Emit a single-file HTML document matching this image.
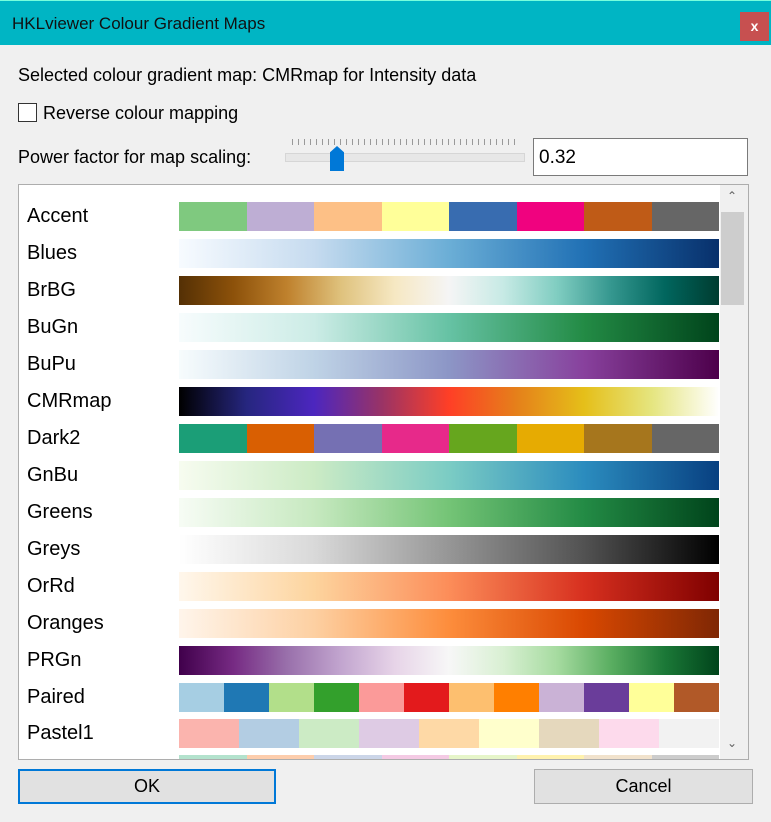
<!DOCTYPE html>
<html><head><meta charset="utf-8"><style>
*{margin:0;padding:0;box-sizing:border-box}
body{width:771px;height:822px;background:#f0f0f0;font-family:"Liberation Sans",sans-serif;position:relative;overflow:hidden;color:#000}
.a{position:absolute}
.title{left:0;top:0;width:771px;height:45px;background:#00b5c4;border-top:1px solid #7fd;}
.title span{position:absolute;left:12px;top:13px;font-size:17px;color:#111}
.close{left:740px;top:12px;width:29px;height:29px;background:#c75050;color:#fff;font-size:14px;font-weight:bold;text-align:center;line-height:28px}
.t{font-size:18px}
.list{left:18px;top:184px;width:731px;height:576px;background:#fff;border:1px solid #adadad;overflow:hidden}
.row{position:absolute;left:0;height:37px;width:700px}
.row span{position:absolute;left:8px;top:3px;font-size:20px}
.bar{position:absolute;left:160px;top:0px;width:540px;height:29px;display:flex}
.bar i{flex:1}
.sb{left:720px;top:185px;width:28px;height:574px;background:#f0f0f0}
.btn{height:35px;background:#e1e1e1;border:1px solid #adadad;text-align:center;font-size:18px;line-height:33px}
</style></head><body>
<div class="a title"><span>HKLviewer Colour Gradient Maps</span></div>
<div class="a close">x</div>
<div class="a t" style="left:18px;top:65px">Selected colour gradient map: CMRmap for Intensity data</div>
<div class="a" style="left:18px;top:103px;width:19px;height:19px;border:1px solid #333;background:#fff"></div>
<div class="a t" style="left:43px;top:103px">Reverse colour mapping</div>
<div class="a t" style="left:18px;top:147px">Power factor for map scaling:</div>
<div class="a" style="left:292px;top:139px;width:226px;height:6px;background:repeating-linear-gradient(90deg,#999 0 1px,transparent 1px 6px)"></div>
<div class="a" style="left:285px;top:153px;width:240px;height:9px;background:#e7e7e7;border:1px solid #d6d6d6"></div>
<div class="a" style="left:330px;top:146px;width:14px;height:25px;background:#0078d7;clip-path:polygon(50% 0,100% 25%,100% 100%,0 100%,0 25%)"></div>
<div class="a" style="left:533px;top:138px;width:215px;height:38px;background:#fff;border:1px solid #7a7a7a;font-size:19px;padding:8px 0 0 5px">0.32</div>
<div class="a list">
<div class="row" style="top:17px"><span>Accent</span><div class="bar"><i style="background:#7fc97f"></i><i style="background:#beaed4"></i><i style="background:#fdc086"></i><i style="background:#ffff99"></i><i style="background:#386cb0"></i><i style="background:#f0027f"></i><i style="background:#bf5b17"></i><i style="background:#666"></i></div></div>
<div class="row" style="top:54px"><span>Blues</span><div class="bar" style="background:linear-gradient(90deg,#f7fbff,#c6dbef,#6baed6,#2171b5,#08306b)"></div></div>
<div class="row" style="top:91px"><span>BrBG</span><div class="bar" style="background:linear-gradient(90deg,#543005,#8c510a,#bf812d,#dfc27d,#f6e8c3,#f5f5f5,#c7eae5,#80cdc1,#35978f,#01665e,#003c30)"></div></div>
<div class="row" style="top:128px"><span>BuGn</span><div class="bar" style="background:linear-gradient(90deg,#f7fcfd,#ccece6,#66c2a4,#238b45,#00441b)"></div></div>
<div class="row" style="top:165px"><span>BuPu</span><div class="bar" style="background:linear-gradient(90deg,#f7fcfd,#bfd3e6,#8c96c6,#88419d,#4d004b)"></div></div>
<div class="row" style="top:202px"><span>CMRmap</span><div class="bar" style="background:linear-gradient(90deg,#000,#26267f,#4c26bf,#993366,#ff3f26,#e5801a,#e5bf19,#e5e57f,#fff)"></div></div>
<div class="row" style="top:239px"><span>Dark2</span><div class="bar"><i style="background:#1b9e77"></i><i style="background:#d95f02"></i><i style="background:#7570b3"></i><i style="background:#e7298a"></i><i style="background:#66a61e"></i><i style="background:#e6ab02"></i><i style="background:#a6761d"></i><i style="background:#666"></i></div></div>
<div class="row" style="top:276px"><span>GnBu</span><div class="bar" style="background:linear-gradient(90deg,#f7fcf0,#ccebc5,#7bccc4,#2b8cbe,#084081)"></div></div>
<div class="row" style="top:313px"><span>Greens</span><div class="bar" style="background:linear-gradient(90deg,#f7fcf5,#c7e9c0,#74c476,#238b45,#00441b)"></div></div>
<div class="row" style="top:350px"><span>Greys</span><div class="bar" style="background:linear-gradient(90deg,#fff,#d9d9d9,#969696,#525252,#000)"></div></div>
<div class="row" style="top:387px"><span>OrRd</span><div class="bar" style="background:linear-gradient(90deg,#fff7ec,#fdd49e,#fc8d59,#d7301f,#7f0000)"></div></div>
<div class="row" style="top:424px"><span>Oranges</span><div class="bar" style="background:linear-gradient(90deg,#fff5eb,#fdd0a2,#fd8d3c,#d94801,#7f2704)"></div></div>
<div class="row" style="top:461px"><span>PRGn</span><div class="bar" style="background:linear-gradient(90deg,#40004b,#762a83,#9970ab,#c2a5cf,#e7d4e8,#f7f7f7,#d9f0d3,#a6dba0,#5aae61,#1b7837,#00441b)"></div></div>
<div class="row" style="top:498px"><span>Paired</span><div class="bar"><i style="background:#a6cee3"></i><i style="background:#1f78b4"></i><i style="background:#b2df8a"></i><i style="background:#33a02c"></i><i style="background:#fb9a99"></i><i style="background:#e31a1c"></i><i style="background:#fdbf6f"></i><i style="background:#ff7f00"></i><i style="background:#cab2d6"></i><i style="background:#6a3d9a"></i><i style="background:#ffff99"></i><i style="background:#b15928"></i></div></div>
<div class="row" style="top:534px"><span>Pastel1</span><div class="bar"><i style="background:#fbb4ae"></i><i style="background:#b3cde3"></i><i style="background:#ccebc5"></i><i style="background:#decbe4"></i><i style="background:#fed9a6"></i><i style="background:#ffffcc"></i><i style="background:#e5d8bd"></i><i style="background:#fddaec"></i><i style="background:#f2f2f2"></i></div></div>
<div class="row" style="top:570px"><div class="bar"><i style="background:#b3e2cd"></i><i style="background:#fdcdac"></i><i style="background:#cbd5e8"></i><i style="background:#f4cae4"></i><i style="background:#e6f5c9"></i><i style="background:#fff2ae"></i><i style="background:#f1e2cc"></i><i style="background:#ccc"></i></div></div>
</div>
<div class="a sb"></div>
<div class="a" style="left:721px;top:212px;width:23px;height:93px;background:#cdcdcd"></div>
<div class="a" style="left:727px;top:189px;font-size:12px;color:#606060">&#8963;</div>
<div class="a" style="left:727px;top:736px;font-size:12px;color:#606060">&#8964;</div>
<div class="a btn" style="left:18px;top:769px;width:258px;border:2px solid #0078d7;line-height:31px">OK</div>
<div class="a btn" style="left:534px;top:769px;width:219px">Cancel</div>
</body></html>
